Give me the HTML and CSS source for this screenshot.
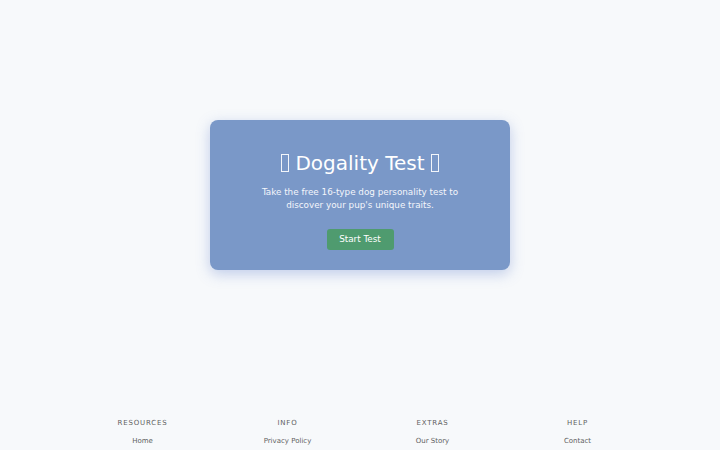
FILE: index.html
```html
<!DOCTYPE html>
<html lang="en">
<head>
<meta charset="utf-8">
<title>Dogality Test</title>
<link rel="stylesheet" href="styles.css">
</head>
<body>
<main class="hero">
  <section class="card">
    <h1 class="title"><span class="tofu" aria-hidden="true"></span> Dogality Test <span class="tofu" aria-hidden="true"></span></h1>
    <p class="lead">Take the free 16-type dog personality test to discover your pup's unique traits.</p>
    <a class="btn" href="#">Start Test</a>
  </section>
</main>
<footer class="footer">
  <div class="col">
    <h3 class="col-title">Resources</h3>
    <a class="col-link" href="#">Home</a>
  </div>
  <div class="col">
    <h3 class="col-title">Info</h3>
    <a class="col-link" href="#">Privacy Policy</a>
  </div>
  <div class="col">
    <h3 class="col-title">Extras</h3>
    <a class="col-link" href="#">Our Story</a>
  </div>
  <div class="col">
    <h3 class="col-title">Help</h3>
    <a class="col-link" href="#">Contact</a>
  </div>
</footer>
</body>
</html>
```

FILE: styles.css
```css
* { box-sizing: border-box; }
html, body { margin: 0; padding: 0; }
body {
  background: #f7f9fb;
  font-family: "DejaVu Sans", sans-serif;
  color: #333;
}
.hero {
  height: 390px;
  display: flex;
  align-items: center;
  justify-content: center;
}
.card {
  width: 300px;
  height: 150px;
  background: #7a98c8;
  border-radius: 8px;
  box-shadow: 0 4px 14px rgba(90, 120, 200, 0.35);
  padding: 30px 20px 20px;
  display: flex;
  flex-direction: column;
  align-items: center;
  text-align: center;
}
.title {
  margin: 0;
  font-size: 20px;
  line-height: 26px;
  font-weight: normal;
  color: #fff;
  white-space: nowrap;
}
.tofu {
  display: inline-block;
  width: 8px;
  height: 18px;
  border: 1px solid rgba(255, 255, 255, 0.9);
  vertical-align: -2px;
}
.lead {
  margin: 10px 0 0;
  max-width: 210px;
  font-size: 8.8px;
  line-height: 13px;
  color: #f4f6fb;
}
.btn {
  margin-top: 17px;
  display: inline-block;
  width: 67px;
  height: 21px;
  line-height: 21px;
  background: #4f9b6f;
  color: #fff;
  font-size: 8.8px;
  text-decoration: none;
  border-radius: 3px;
}
.footer {
  width: 580px;
  margin: 0 auto;
  padding-top: 28px;
  display: grid;
  grid-template-columns: repeat(4, 1fr);
  text-align: center;
}
.col {
  display: flex;
  flex-direction: column;
  align-items: center;
}
.col-title {
  margin: 0;
  font-size: 7px;
  line-height: 10px;
  font-weight: normal;
  letter-spacing: 0.8px;
  text-transform: uppercase;
  color: #5f5f5f;
}
.col-link {
  margin-top: 8px;
  font-size: 7px;
  line-height: 10px;
  color: #5f5f5f;
  text-decoration: none;
}
```
